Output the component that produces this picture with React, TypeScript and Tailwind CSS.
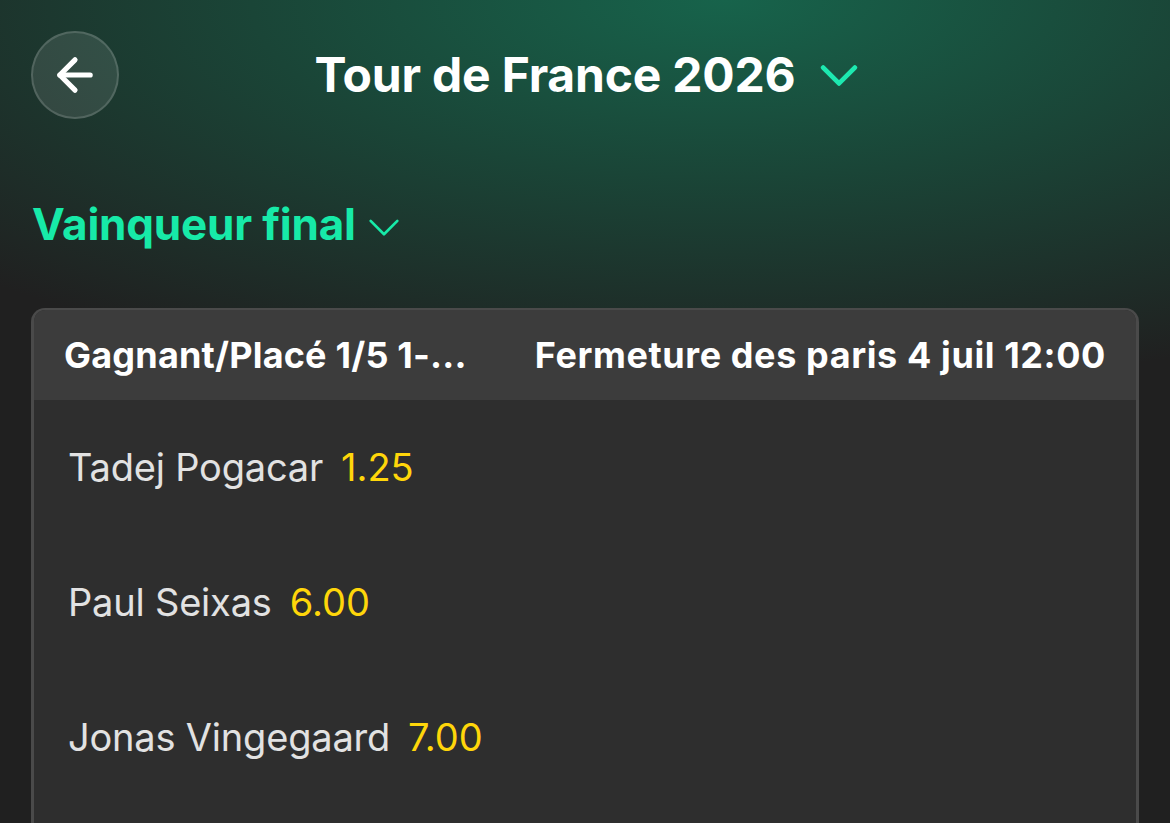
import { ArrowLeft } from 'lucide-react';

const runners = [
  { name: 'Tadej Pogacar', odds: '1.25' },
  { name: 'Paul Seixas', odds: '6.00' },
  { name: 'Jonas Vingegaard', odds: '7.00' },
];

function Chevron({ className, stroke }: { className: string; stroke: number }) {
  return (
    <svg viewBox="0 0 36 22" fill="none" className={className}>
      <polyline points="3,3 18,18 33,3" stroke="currentColor" strokeWidth={stroke} strokeLinecap="round" strokeLinejoin="round" />
    </svg>
  );
}

export default function App() {
  return (
    <div
      className="w-[1170px] h-[823px] overflow-hidden bg-[#202020] bg-[radial-gradient(ellipse_90%_48%_at_62%_0%,#17634b_0%,#1a4537_45%,#202020_100%)]"
      style={{ fontFamily: 'Inter, "Noto Sans", sans-serif' }}
    >
      {/* Top bar */}
      <div className="relative flex h-[150px] items-center justify-center">
        <button className="absolute left-[31px] top-[31px] flex h-[88px] w-[88px] items-center justify-center rounded-full border-2 border-white/15 bg-white/10">
          <ArrowLeft className="h-[52px] w-[52px] text-white" strokeWidth={2.4} />
        </button>
        <div className="flex items-center gap-[24px] pl-[2px]">
          <h1 className="text-[48px] font-bold tracking-[-0.2px] text-white">Tour de France 2026</h1>
          <Chevron className="mt-[2px] h-[24px] w-[38px] text-[#1de9b0]" stroke={4.5} />
        </div>
      </div>

      {/* Market selector */}
      <div className="flex h-[150px] items-center gap-[12px] pl-[32px] pb-[2px]">
        <span className="text-[44px] font-bold tracking-[-0.2px] text-[#17eaa8]">Vainqueur final</span>
        <Chevron className="mt-[8px] h-[20px] w-[32px] text-[#17eaa8]" stroke={3} />
      </div>

      {/* Card */}
      <div className="mx-[31px] mt-[8px] overflow-hidden rounded-t-[14px] border-x-[3px] border-t-[2px] border-[#4a4a4a] bg-[#2e2e2e]">
        <div className="flex h-[90px] items-center justify-between bg-[#3c3c3c] px-[30px]">
          <span className="text-[36px] font-bold tracking-[0.2px] text-white">Gagnant/Placé 1/5 1-...</span>
          <span className="text-[36px] font-bold tracking-[0.6px] text-white">Fermeture des paris 4 juil 12:00</span>
        </div>
        <div className="flex flex-col pb-[40px]">
          {runners.map((r) => (
            <div key={r.name} className="flex h-[135px] items-center gap-[18px] px-[34px]">
              <span className="text-[38px] tracking-[-0.2px] text-[#e2e2e2]">{r.name}</span>
              <span className="text-[38px] text-[#ffd60a]">{r.odds}</span>
            </div>
          ))}
        </div>
      </div>
    </div>
  );
}
